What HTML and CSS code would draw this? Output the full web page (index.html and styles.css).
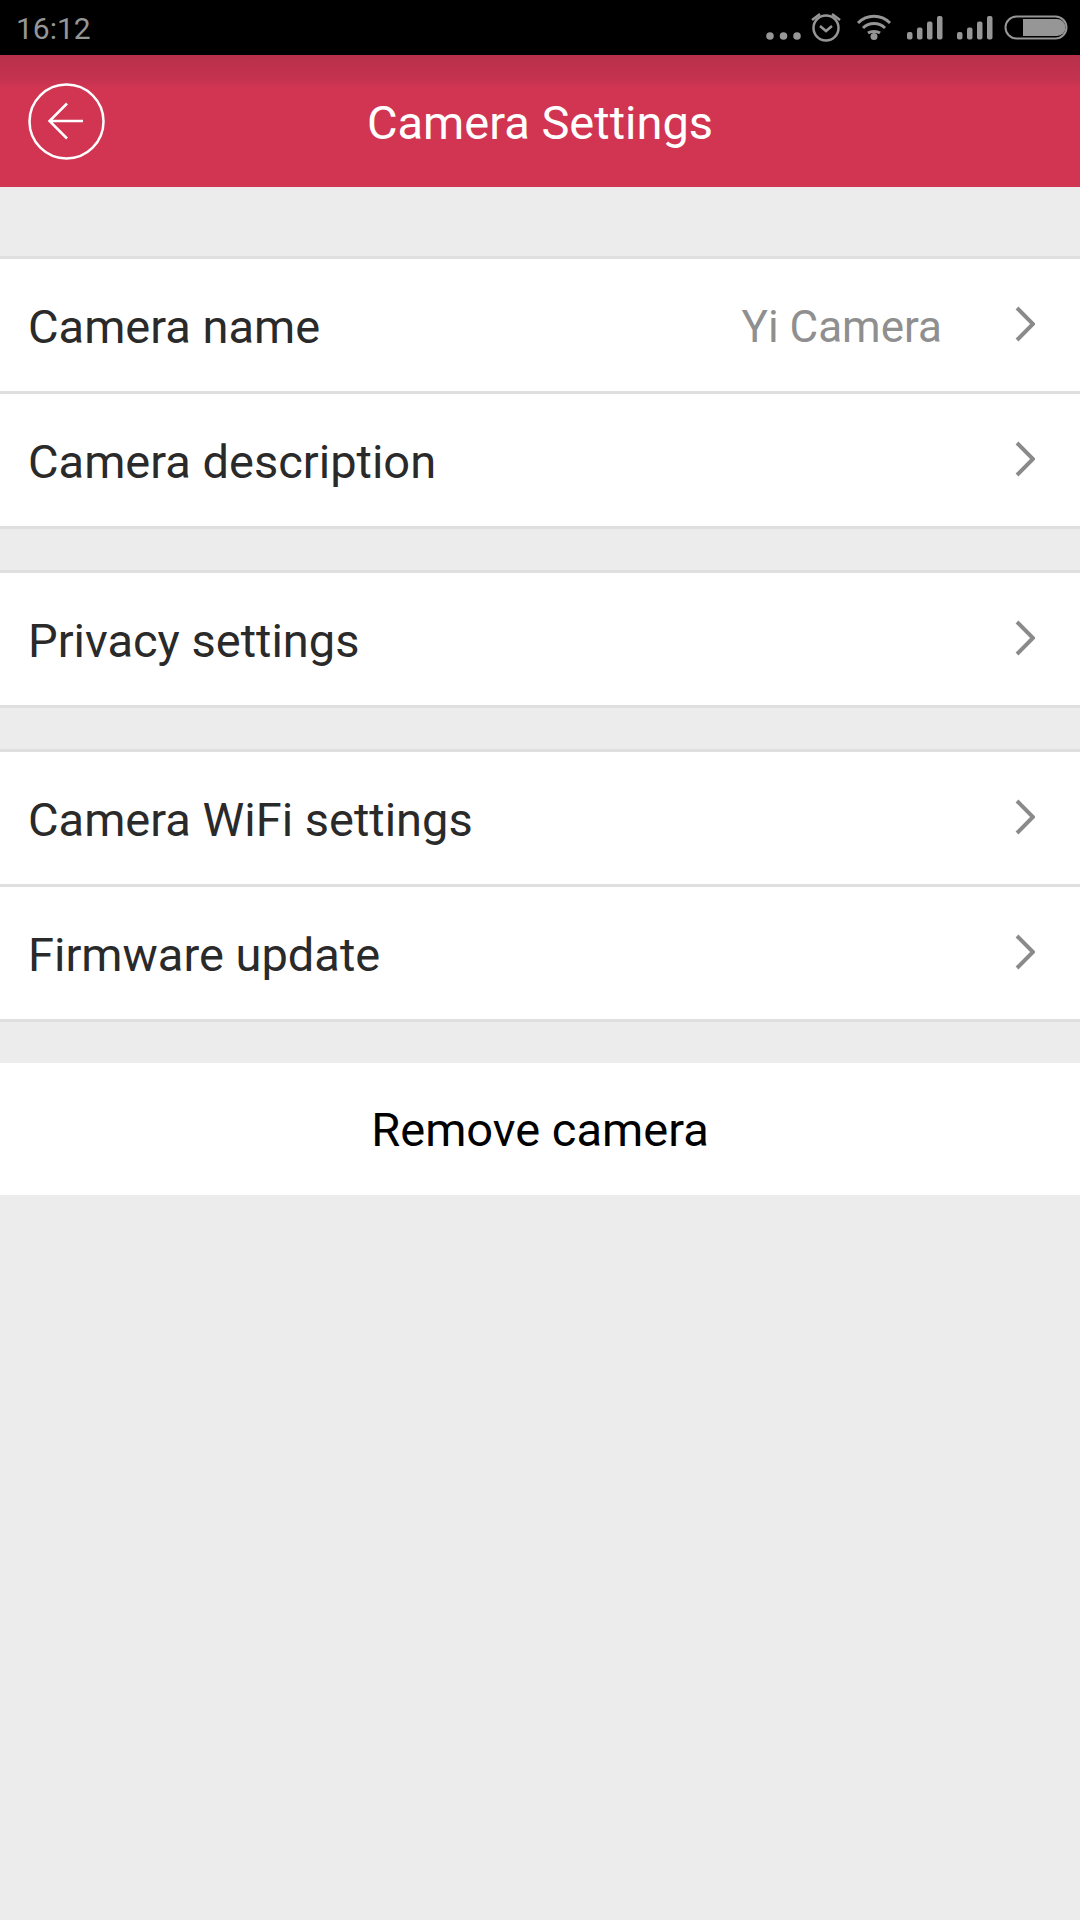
FILE: index.html
```html
<!DOCTYPE html>
<html lang="en">
<head>
    <meta charset="UTF-8">
    <meta name="viewport" content="width=device-width, initial-scale=1.0">
    <title>Camera Settings</title>
    <link rel="stylesheet" href="styles.css">
</head>
<body>
    <div class="status-bar">
        <span class="clock">16:12</span>
        <svg class="status-icons" width="340" height="55" viewBox="0 0 340 55">
            <g fill="#969696">
                <circle cx="30" cy="36" r="3.800"/>
                <circle cx="43.500" cy="36" r="3.800"/>
                <circle cx="57" cy="36" r="3.800"/>
                <rect x="167" y="32" width="5.500" height="7.500" rx="2"/>
                <rect x="177" y="27.500" width="5.500" height="12" rx="2"/>
                <rect x="187" y="21.500" width="5.500" height="18" rx="2"/>
                <rect x="197" y="16" width="5.500" height="23.500" rx="2"/>
                <rect x="217" y="32" width="5.500" height="7.500" rx="2"/>
                <rect x="227" y="27.500" width="5.500" height="12" rx="2"/>
                <rect x="237" y="21.500" width="5.500" height="18" rx="2"/>
                <rect x="247" y="16" width="5.500" height="23.500" rx="2"/>
                <circle cx="134" cy="36.500" r="3.500"/>
                <path d="M283 19h34a8.500 8.500 0 0 1 8.500 8.500v0a8.500 8.500 0 0 1-8.500 8.500h-34z"/>
            </g>
            <g fill="none" stroke="#969696" stroke-width="2.500">
                <circle cx="86" cy="28" r="12.500"/>
                <path d="M80 26l6 5 6-5"/>
                <path d="M72 20l8-6M100 20l-8-6"/>
                <path d="M118 23c9-9 23-9 32 0M123 28c6-6 16-6 22 0M128 33c3-2 9-2 12 0" stroke-width="3"/>
                <rect x="265.500" y="16.500" width="61" height="22" rx="11" stroke-width="2"/>
            </g>
        </svg>
    </div>

    <div class="header">
        <svg class="back-icon" width="77" height="77" viewBox="0 0 77 77">
            <g fill="none" stroke="#ffffff" stroke-width="2.500">
                <circle cx="38.500" cy="38.500" r="37"/>
                <path d="M22 38h33M39 20.500L21.500 38 39 55.500"/>
            </g>
        </svg>
        <h1>Camera Settings</h1>
    </div>

    <div class="group first">
        <div class="row">
            <span class="label">Camera name</span>
            <span class="value">Yi Camera</span>
            <svg class="chevron" width="20" height="36" viewBox="0 0 20 36"><path d="M2 2l16 16L2 34" fill="none" stroke="#8a8a8a" stroke-width="4"/></svg>
        </div>
        <div class="row">
            <span class="label">Camera description</span>
            <svg class="chevron" width="20" height="36" viewBox="0 0 20 36"><path d="M2 2l16 16L2 34" fill="none" stroke="#8a8a8a" stroke-width="4"/></svg>
        </div>
    </div>

    <div class="group">
        <div class="row">
            <span class="label">Privacy settings</span>
            <svg class="chevron" width="20" height="36" viewBox="0 0 20 36"><path d="M2 2l16 16L2 34" fill="none" stroke="#8a8a8a" stroke-width="4"/></svg>
        </div>
    </div>

    <div class="group">
        <div class="row">
            <span class="label">Camera WiFi settings</span>
            <svg class="chevron" width="20" height="36" viewBox="0 0 20 36"><path d="M2 2l16 16L2 34" fill="none" stroke="#8a8a8a" stroke-width="4"/></svg>
        </div>
        <div class="row">
            <span class="label">Firmware update</span>
            <svg class="chevron" width="20" height="36" viewBox="0 0 20 36"><path d="M2 2l16 16L2 34" fill="none" stroke="#8a8a8a" stroke-width="4"/></svg>
        </div>
    </div>

    <div class="remove-btn">Remove camera</div>
</body>
</html>
```

FILE: styles.css
```css
html, body {
    height: 100%;
}

body {
    font-family: 'Roboto', 'Liberation Sans', sans-serif;
    background: #ececec;
    margin: 0;
}

.status-bar {
    height: 55px;
    background: #000000;
    display: flex;
    align-items: center;
    justify-content: space-between;
    padding-left: 16px;
}

.clock {
    color: #969696;
    font-size: 30px;
    padding-top: 2px;
}

.status-icons {
    display: block;
}

.header {
    height: 132px;
    background: linear-gradient(180deg, #b9304b 0px, #c43350 24px, #d23552 34px, #d23552 100%);
    display: flex;
    align-items: center;
    justify-content: center;
    position: relative;
}

.header h1 {
    color: #ffffff;
    font-size: 47px;
    font-weight: 400;
    margin: 0;
    padding-top: 2px;
}

.back-icon {
    position: absolute;
    left: 28px;
    top: 28px;
}

.group {
    margin-top: 41px;
    border-top: 3px solid #dfdfdf;
    background: #ffffff;
}

.group.first {
    margin-top: 69px;
}

.row {
    height: 132px;
    border-bottom: 3px solid #dfdfdf;
    display: flex;
    align-items: center;
    padding: 0 45px 0 28px;
}

.label {
    color: #2a2a2a;
    font-size: 47px;
    flex: 1;
    padding-top: 2px;
}

.value {
    color: #8f8f8f;
    font-size: 44px;
    margin-right: 73px;
    padding-top: 4px;
}

.chevron {
    display: block;
    margin-top: -2px;
}

.remove-btn {
    margin-top: 41px;
    height: 132px;
    background: #ffffff;
    color: #000000;
    font-size: 47px;
    display: flex;
    align-items: center;
    justify-content: center;
}
```
